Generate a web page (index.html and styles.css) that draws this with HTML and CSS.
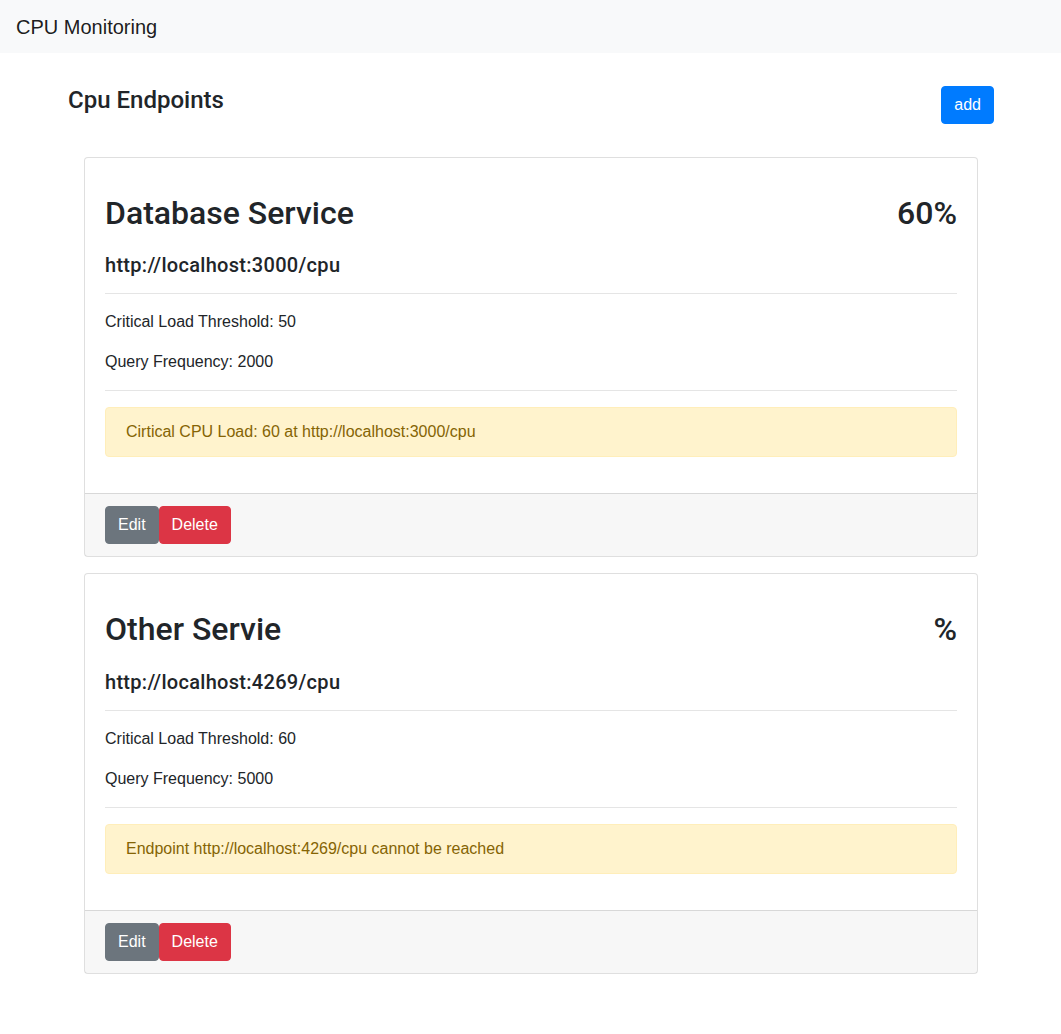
FILE: index.html
```html
<!DOCTYPE html>
<html lang="en">
<head>
<meta charset="utf-8">
<title>CPU Monitoring</title>
<link rel="stylesheet" href="styles.css">
</head>
<body>
<nav class="navbar">
  <span class="brand">CPU Monitoring</span>
</nav>
<main class="container">
  <div class="page-header">
    <h4 class="page-title">Cpu Endpoints</h4>
    <button class="btn btn-primary">add</button>
  </div>
  <div class="cards">
    <section class="card">
      <div class="card-body">
        <div class="title-row">
          <h2 class="card-title">Database Service</h2>
          <h2 class="card-title">60%</h2>
        </div>
        <h5 class="card-subtitle">http://localhost:3000/cpu</h5>
        <hr class="divider">
        <p class="info">Critical Load Threshold: 50</p>
        <p class="info">Query Frequency: 2000</p>
        <hr class="divider">
        <div class="alert">Cirtical CPU Load: 60 at http://localhost:3000/cpu</div>
      </div>
      <div class="card-footer">
        <button class="btn btn-secondary">Edit</button><button class="btn btn-danger">Delete</button>
      </div>
    </section>
    <section class="card">
      <div class="card-body">
        <div class="title-row">
          <h2 class="card-title">Other Servie</h2>
          <h2 class="card-title">%</h2>
        </div>
        <h5 class="card-subtitle">http://localhost:4269/cpu</h5>
        <hr class="divider">
        <p class="info">Critical Load Threshold: 60</p>
        <p class="info">Query Frequency: 5000</p>
        <hr class="divider">
        <div class="alert">Endpoint http://localhost:4269/cpu cannot be reached</div>
      </div>
      <div class="card-footer">
        <button class="btn btn-secondary">Edit</button><button class="btn btn-danger">Delete</button>
      </div>
    </section>
  </div>
</main>
</body>
</html>
```
FILE: styles.css
```css
* { box-sizing: border-box; }
html, body { margin: 0; padding: 0; }
body {
  font-family: "Liberation Sans", Arial, sans-serif;
  font-size: 16px;
  line-height: 1.5;
  color: #212529;
  background: #fff;
}
.navbar {
  height: 53px;
  background: #f8f9fa;
  display: flex;
  align-items: center;
  padding: 0 16px;
}
.brand {
  font-size: 20px;
  line-height: 30px;
  color: rgba(0,0,0,.9);
}
.container {
  width: 926px;
  margin: 0 auto 0 68px;
  padding-top: 33px;
  padding-bottom: 40px;
}
.page-header {
  display: flex;
  justify-content: space-between;
  align-items: flex-start;
  margin-bottom: 33px;
}
.page-title {
  margin: 0;
  font-family: Roboto, "Liberation Sans", sans-serif;
  font-size: 24px;
  font-weight: 500;
  line-height: 1.2;
}
.btn {
  font-family: inherit;
  font-size: 16px;
  line-height: 24px;
  padding: 6px 12px;
  border: 1px solid transparent;
  border-radius: 4px;
  color: #fff;
  cursor: pointer;
}
.btn-primary { background: #007bff; border-color: #007bff; }
.btn-secondary { background: #6c757d; border-color: #6c757d; }
.btn-danger { background: #dc3545; border-color: #dc3545; }
.cards {
  margin: 0 16px;
  display: flex;
  flex-direction: column;
  gap: 16px;
}
.card {
  border: 1px solid rgba(0,0,0,.125);
  border-radius: 4px;
  background: #fff;
}
.card-body {
  padding: 20px;
}
.title-row {
  display: flex;
  justify-content: space-between;
  margin-top: 16px;
  margin-bottom: 21px;
}
.card-title {
  margin: 0;
  font-family: Roboto, "Liberation Sans", sans-serif;
  font-size: 32px;
  font-weight: 500;
  line-height: 1.2;
}
.card-subtitle {
  margin: 0;
  font-family: Roboto, "Liberation Sans", sans-serif;
  font-size: 20px;
  font-weight: 500;
  line-height: 1.2;
  letter-spacing: 0.3px;
}
.divider {
  margin: 16px 0;
  border: 0;
  border-top: 1px solid rgba(0,0,0,.1);
}
.info {
  margin: 0 0 16px;
}
.alert {
  padding: 12px 20px;
  margin-bottom: 16px;
  border: 1px solid #ffeeba;
  border-radius: 4px;
  background: #fff3cd;
  color: #856404;
}
.card-footer {
  padding: 12px 20px;
  background: rgba(0,0,0,.03);
  border-top: 1px solid rgba(0,0,0,.125);
  display: flex;
}
```
